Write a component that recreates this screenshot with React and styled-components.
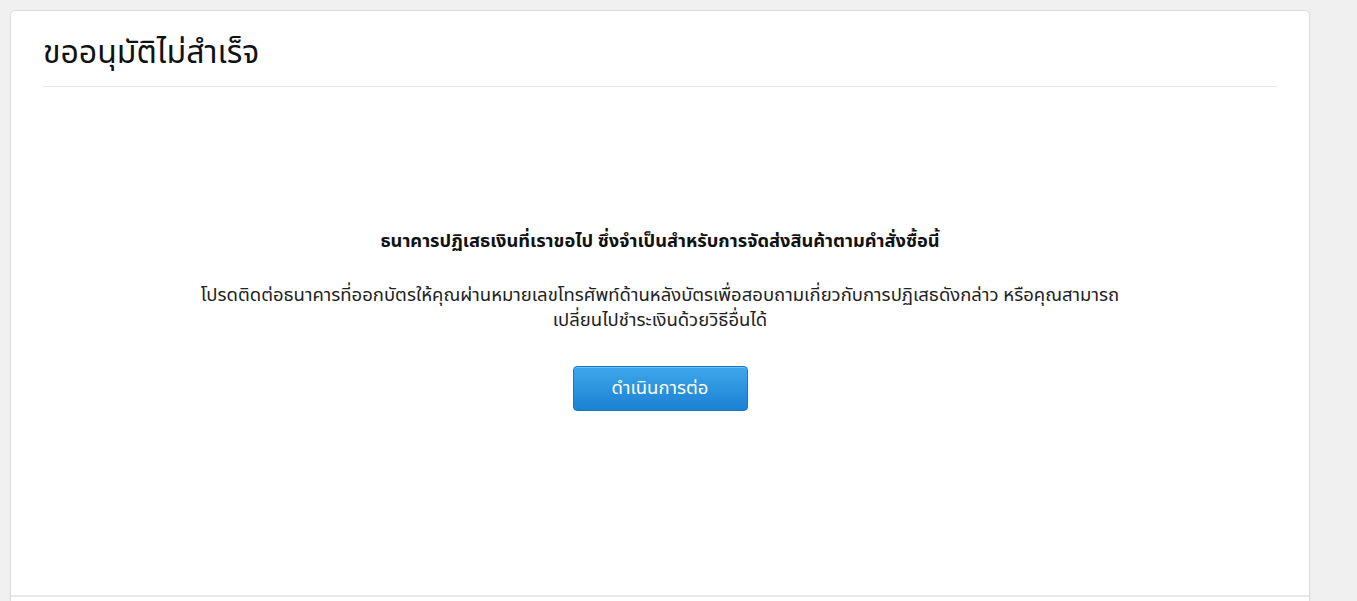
import React from "react";
import styled, { createGlobalStyle } from "styled-components";

const Global = createGlobalStyle`
  html, body { margin: 0; padding: 0; background: #f0f0f0; }
  body {
    font-family: "Noto Sans Thai", "Noto Sans Thai UI", "Noto Sans", "DejaVu Sans", sans-serif;
    color: #1a1a1a;
    overflow: hidden;
  }
`;

const Page = styled.div`
  padding: 10px 46px 0 10px;
  height: 601px;
  box-sizing: border-box;
`;

const Card = styled.section`
  background: #fff;
  border: 1px solid #dcdcdc;
  border-radius: 5px;
  box-shadow: 0 1px 2px rgba(0,0,0,0.05);
  width: 1300px;
  box-sizing: border-box;
  overflow: hidden;
`;

const Header = styled.header`
  margin: 0 32px;
  padding: 21px 0 12px;
  border-bottom: 1px solid #e6e6e6;
`;

const Title = styled.h1`
  margin: 0;
  font-size: 32px;
  font-weight: 400;
  line-height: 42px;
  color: #111;
`;

const Body = styled.div`
  height: 510px;
  display: flex;
  flex-direction: column;
  align-items: center;
  padding-top: 143px;
  box-sizing: border-box;
  border-bottom: 2px solid #e8e8e8;
  text-align: center;
`;

const Lead = styled.p`
  margin: 0;
  font-size: 18.3px;
  font-weight: 700;
  line-height: 24px;
  color: #111;
`;

const Text = styled.p`
  margin: 29px 0 0;
  font-size: 18.5px;
  line-height: 25px;
  color: #222;
  max-width: 1100px;
`;

const Button = styled.button`
  margin-top: 33px;
  width: 175px;
  height: 45px;
  border: 1px solid #1877c2;
  border-radius: 4px;
  background: linear-gradient(#3ea7ea, #1b80d3);
  color: #fff;
  font-family: inherit;
  font-size: 18.5px;
  line-height: 1;
  cursor: pointer;
  box-shadow: inset 0 1px 0 rgba(255,255,255,0.25);
`;

const Footer = styled.div`
  height: 40px;
`;

export default function App() {
  return (
    <>
      <Global />
      <Page>
        <Card>
          <Header>
            <Title>ขออนุมัติไม่สำเร็จ</Title>
          </Header>
          <Body>
            <Lead>ธนาคารปฏิเสธเงินที่เราขอไป ซึ่งจำเป็นสำหรับการจัดส่งสินค้าตามคำสั่งซื้อนี้</Lead>
            <Text>
              โปรดติดต่อธนาคารที่ออกบัตรให้คุณผ่านหมายเลขโทรศัพท์ด้านหลังบัตรเพื่อสอบถามเกี่ยวกับการปฏิเสธดังกล่าว หรือคุณสามารถ
              <br />
              เปลี่ยนไปชำระเงินด้วยวิธีอื่นได้
            </Text>
            <Button>ดำเนินการต่อ</Button>
          </Body>
          <Footer />
        </Card>
      </Page>
    </>
  );
}
